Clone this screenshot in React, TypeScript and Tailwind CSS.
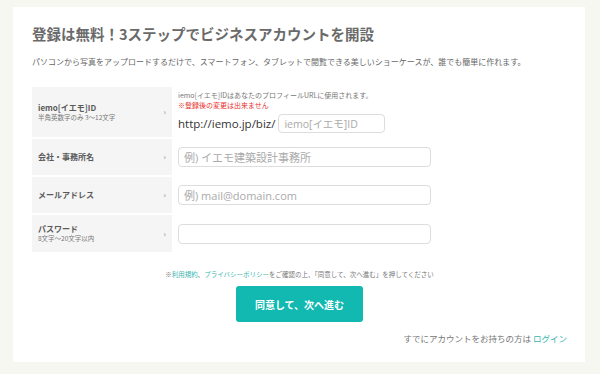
const jp = "font-['Noto_Sans_CJK_JP',sans-serif]";

function Label({ title, sub }: { title: string; sub?: string }) {
  return (
    <div className="w-[140px] shrink-0 bg-[#f5f5f5] flex items-center pl-[6px] pr-[6px]">
      <div className="flex-1">
        <div className="text-[8px] leading-[10px] font-bold text-[#5a5a5a]">{title}</div>
        {sub && <div className="text-[6.5px] leading-[9px] text-[#777]">{sub}</div>}
      </div>
      <span className="text-[8px] text-[#888]">›</span>
    </div>
  );
}

function Field({ placeholder, type = "text" }: { placeholder?: string; type?: string }) {
  return (
    <input
      type={type}
      placeholder={placeholder}
      className="w-[253px] h-[20px] rounded-[4px] border border-[#ddd] px-[5px] text-[11px] font-['Open_Sans','Noto_Sans_CJK_JP',sans-serif] placeholder:text-[#aaa] outline-none"
    />
  );
}

export default function App() {
  return (
    <div className={`w-[600px] h-[374px] bg-[#f7f7f2] pt-[7px] pl-[13px] ${jp}`}>
      <div className="w-[572px] h-[355px] bg-white pt-[17px] pl-[19px] pr-[18px]">
        <h1 className="text-[14.5px] leading-[20px] font-bold text-[#6a6a6a]">
          登録は無料！3ステップでビジネスアカウントを開設
        </h1>
        <p className="mt-[12px] text-[8px] leading-[12px] text-[#666]">
          パソコンから写真をアップロードするだけで、スマートフォン、タブレットで閲覧できる美しいショーケースが、誰でも簡単に作れます。
        </p>

        <div className="mt-[19px] flex flex-col gap-[2px]">
          <div className="flex h-[50px] gap-[6px]">
            <Label title="iemo[イエモ]ID" sub="半角英数字のみ 3〜12文字" />
            <div className="pt-[3px]">
              <div className="text-[7px] leading-[10px] text-[#777]">
                iemo[イエモ]IDはあなたのプロフィールURLに使用されます。
              </div>
              <div className="text-[7px] leading-[10px] text-[#e8322f]">※登録後の変更は出来ません</div>
              <div className="mt-[4px] flex items-center gap-[3px]">
                <span className="text-[11.5px] font-['Open_Sans',sans-serif] text-[#333]">http://iemo.jp/biz/</span>
                <input
                  placeholder="iemo[イエモ]ID"
                  className="w-[107px] h-[19px] rounded-[4px] border border-[#ddd] px-[5px] text-[10.5px] font-['Open_Sans','Noto_Sans_CJK_JP',sans-serif] placeholder:text-[#aaa] outline-none"
                />
              </div>
            </div>
          </div>
          <div className="flex h-[36px] gap-[6px]">
            <Label title="会社・事務所名" />
            <div className="flex items-center">
              <Field placeholder="例) イエモ建築設計事務所" />
            </div>
          </div>
          <div className="flex h-[36px] gap-[6px]">
            <Label title="メールアドレス" />
            <div className="flex items-center">
              <Field placeholder="例) mail@domain.com" />
            </div>
          </div>
          <div className="flex h-[37px] gap-[6px]">
            <Label title="パスワード" sub="8文字〜20文字以内" />
            <div className="flex items-center">
              <Field type="password" />
            </div>
          </div>
        </div>

        <p className="mt-[17px] text-center text-[6.5px] leading-[10px] text-[#777]">
          ※<span className="text-[#3ab5b0]">利用規約</span>、
          <span className="text-[#3ab5b0]">プライバシーポリシー</span>
          をご確認の上、「同意して、次へ進む」を押してください
        </p>
        <div className="mt-[7px] flex justify-center">
          <button className="w-[127px] h-[36px] rounded-[3px] bg-[#12b9b1] text-white text-[10px] font-bold">
            同意して、次へ進む
          </button>
        </div>
        <p className="mt-[10px] text-right text-[8.5px] leading-[12px] text-[#777]">
          すでにアカウントをお持ちの方は <span className="text-[#3ab5b0]">ログイン</span>
        </p>
      </div>
    </div>
  );
}
